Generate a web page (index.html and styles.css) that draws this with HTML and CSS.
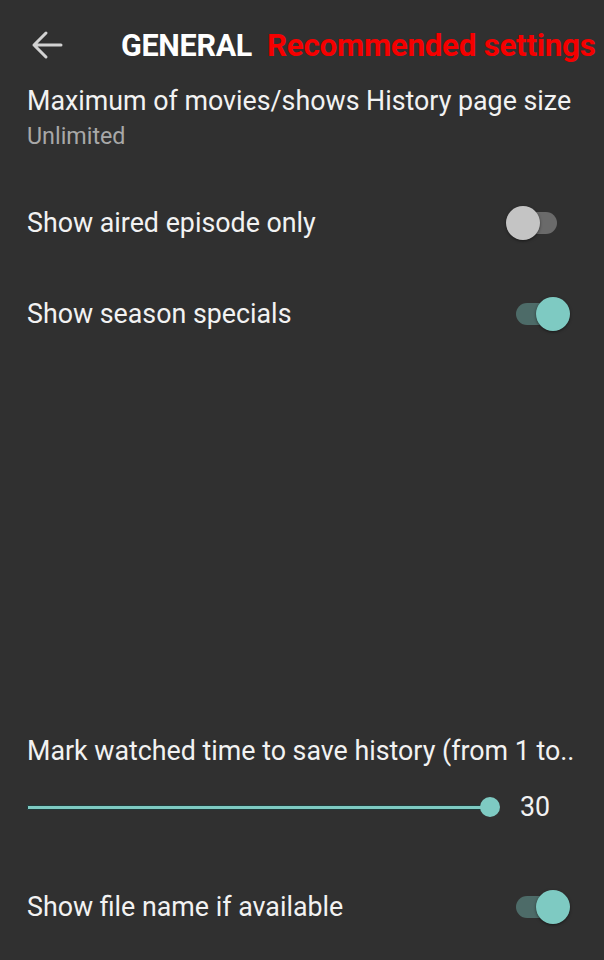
FILE: index.html
```html
<!DOCTYPE html>
<html>
<head>
<meta charset="utf-8">
<link rel="stylesheet" href="styles.css">
</head>
<body>
<div class="screen">
  <header class="toolbar">
    <svg class="back" width="32" height="30" viewBox="0 0 32 30"><path d="M30 15H3M15 3L3 15L15 27" fill="none" stroke="#d2d2d2" stroke-width="3" stroke-linecap="round" stroke-linejoin="round"/></svg>
    <span class="title">GENERAL</span>
    <span class="rec">Recommended settings</span>
  </header>
  <div class="pref pref-two">
    <div class="pref-title">Maximum of movies/shows History page size</div>
    <div class="pref-sub">Unlimited</div>
  </div>
  <div class="pref pref-row first-switch">
    <div class="pref-title">Show aired episode only</div>
    <div class="switch off"><span class="track"></span><span class="thumb"></span></div>
  </div>
  <div class="pref pref-row">
    <div class="pref-title">Show season specials</div>
    <div class="switch on"><span class="track"></span><span class="thumb"></span></div>
  </div>
  <div class="gap"></div>
  <div class="pref pref-slider">
    <div class="pref-title">Mark watched time to save history (from 1 to..</div>
    <div class="slider-row">
      <div class="slider"><span class="bar"></span><span class="knob"></span></div>
      <span class="value">30</span>
    </div>
  </div>
  <div class="pref pref-row last">
    <div class="pref-title">Show file name if available</div>
    <div class="switch on"><span class="track"></span><span class="thumb"></span></div>
  </div>
</div>
</body>
</html>
```
FILE: styles.css
```css
* { box-sizing: border-box; }
html, body { margin: 0; padding: 0; background: #303030; }
body { font-family: Roboto, "Noto Sans", sans-serif; color: #fff; width: 604px; height: 960px; overflow: hidden; }
.screen { display: flex; flex-direction: column; }
.toolbar { display: flex; align-items: center; height: 90px; padding: 0 0 0 31px; }
.back { flex: none; }
.title { font-size: 30.5px; font-weight: 700; margin-left: 58px; color: #fff; letter-spacing: -0.3px; }
.rec { font-size: 31.4px; font-weight: 700; margin-left: 15px; color: #f50000; letter-spacing: -0.3px; }
.pref { padding: 0 32px 0 27px; }
.pref-title { font-size: 26.8px; line-height: 30px; color: #f2f2f2; white-space: nowrap; }
.pref-two { margin-top: -4px; }
.pref-sub { font-size: 23.3px; line-height: 28px; color: #a8a8a8; margin-top: 6px; }
.pref-row { display: flex; align-items: center; justify-content: space-between; height: 91px; }
.first-switch { margin-top: 27px; }
.switch { position: relative; width: 56px; height: 36px; flex: none; }
.switch .track { position: absolute; left: 4px; top: 7px; width: 50px; height: 22px; border-radius: 11px; }
.switch .thumb { position: absolute; top: 1px; width: 34px; height: 34px; border-radius: 50%; box-shadow: 0 1px 3px rgba(0,0,0,.5); }
.switch.off { margin-right: 13px; }
.switch.off .track { background: #6a6a6a; }
.switch.off .thumb { left: 3px; background: #c4c4c4; }
.switch.on { margin-right: 0; }
.switch.on .track { background: #4d6b68; left: 0; }
.switch.on .thumb { left: 20px; background: #7ecac2; }
.gap { height: 377px; }
.pref-slider { height: 129px; }
.slider-row { display: flex; align-items: center; margin-top: 25px; }
.slider { position: relative; width: 473px; height: 24px; flex: none; }
.slider .bar { position: absolute; left: 0; right: 10px; top: 10px; height: 5px; background: #7ecac2; border: 1px solid #1f3a3a; border-radius: 1px; }
.slider .knob { position: absolute; right: 0; top: 2px; width: 20px; height: 20px; border-radius: 50%; background: #7ecac2; }
.value { font-size: 26.8px; margin-left: 20px; color: #f2f2f2; }
.last { margin-top: -4px; }
```
